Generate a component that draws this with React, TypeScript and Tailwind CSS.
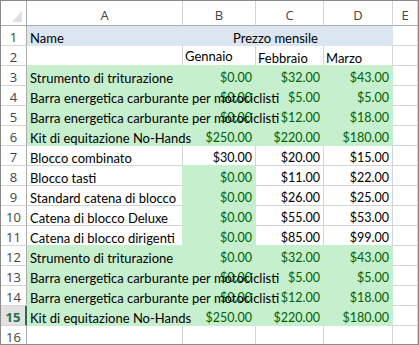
type Fill = "g" | "b" | null

const COLS = ["A", "B", "C", "D", "E"]

// fill per row (rows 1-16), columns A-E
const FILLS: Fill[][] = [
  ["b", "b", "b", "b", null],
  [null, null, null, null, null],
  ["g", "g", "g", "g", null],
  ["g", "g", "g", "g", null],
  ["g", "g", "g", "g", null],
  ["g", "g", "g", "g", null],
  [null, null, null, null, null],
  [null, "g", null, null, null],
  [null, "g", null, null, null],
  [null, "g", null, null, null],
  [null, "g", null, null, null],
  ["g", "g", "g", "g", null],
  ["g", "g", "g", "g", null],
  ["g", "g", "g", "g", null],
  ["g", "g", "g", "g", null],
  [null, null, null, null, null],
]

const BARRA = "Barra energetica carburante per motociclisti"

// rows 3-16: name + Gennaio / Febbraio / Marzo
const DATA: [string, string, string, string][] = [
  ["Strumento di triturazione", "$0.00", "$32.00", "$43.00"],
  [BARRA, "$0.00", "$5.00", "$5.00"],
  [BARRA, "$0.00", "$12.00", "$18.00"],
  ["Kit di equitazione No-Hands", "$250.00", "$220.00", "$180.00"],
  ["Blocco combinato", "$30.00", "$20.00", "$15.00"],
  ["Blocco tasti", "$0.00", "$11.00", "$22.00"],
  ["Standard catena di blocco", "$0.00", "$26.00", "$25.00"],
  ["Catena di blocco Deluxe", "$0.00", "$55.00", "$53.00"],
  ["Catena di blocco dirigenti", "$0.00", "$85.00", "$99.00"],
  ["Strumento di triturazione", "$0.00", "$32.00", "$43.00"],
  [BARRA, "$0.00", "$5.00", "$5.00"],
  [BARRA, "$0.00", "$12.00", "$18.00"],
  ["Kit di equitazione No-Hands", "$250.00", "$220.00", "$180.00"],
  ["", "", "", ""],
]

const BG = { g: "bg-[#c6efce]", b: "bg-[#dce6f1]", n: "bg-white" }
const RIGHT = { g: "border-r-[#c6efce]", b: "border-r-[#dce6f1]", n: "border-r-[#d4d4d4]" }
const BOTTOM = { g: "border-b-[#c6efce]", b: "border-b-[#dce6f1]", n: "border-b-[#d4d4d4]" }

const key = (f: Fill | undefined) => (f ? f : "n")

// a filled cell hides the gridlines on its edges
function edges(r: number, c: number) {
  const own = FILLS[r][c]
  const right = own ?? FILLS[r][c + 1] ?? null
  const below = own ?? FILLS[r + 1]?.[c] ?? null
  return `${BG[key(own)]} ${RIGHT[key(right)]} ${BOTTOM[key(below)]}`
}

const textFont = "font-[family-name:Lato,sans-serif] text-[13px] leading-[14px]"
const numFont = "font-[family-name:Lato,sans-serif] text-[12.5px] leading-[14px]"
const headFont = "font-[family-name:Open_Sans,sans-serif] text-[13px] leading-[14px] text-[#444]"

function RowHeader({ n }: { n: number }) {
  const active = n === 15
  return (
    <div
      className={`flex justify-center items-start pt-[4px] border-b border-b-[#d4d4d4] ${headFont} ${
        active
          ? "bg-[#e1e1e1] border-r-2 border-r-[#217346] font-bold !text-[#217346]"
          : "bg-white border-r border-r-[#ababab]"
      }`}
    >
      {n}
    </div>
  )
}

export default function App() {
  return (
    <div className="w-[419px] h-[345px] overflow-hidden bg-white border border-[#8a8a8a]">
      <div className="grid h-full grid-cols-[26px_156px_73px_68px_69px_1fr] grid-rows-[25px_repeat(15,20px)_1fr]">
        {/* intestazioni colonne */}
        <div className="flex items-end justify-end pr-[4px] pb-[3px] border-r border-b border-[#ababab] bg-white">
          <svg width="10" height="11" viewBox="0 0 10 11">
            <polygon points="10,0 10,11 0,11" fill="#dfdfdf" />
          </svg>
        </div>
        {COLS.map((c) => (
          <div
            key={c}
            className={`flex justify-center items-start pt-[7px] bg-white border-r border-r-[#d4d4d4] border-b border-b-[#ababab] ${headFont}`}
          >
            {c}
          </div>
        ))}

        {/* riga 1 */}
        <RowHeader n={1} />
        <div className={`flex items-end pl-[3px] border-r border-b ${edges(0, 0)} ${textFont}`}>Name</div>
        <div className={`col-span-3 flex items-end justify-center pr-[24px] border-r border-b ${edges(0, 3)} ${textFont}`}>
          Prezzo mensile
        </div>
        <div className={`border-r border-b ${edges(0, 4)}`} />

        {/* riga 2 */}
        <RowHeader n={2} />
        <div className={`border-r border-b ${edges(1, 0)}`} />
        <div className={`flex items-end pl-[2px] pb-[2px] border-r border-b ${edges(1, 1)} ${textFont}`}>Gennaio</div>
        <div className={`flex items-end pl-[2px] border-r border-b ${edges(1, 2)} ${textFont}`}>Febbraio</div>
        <div className={`flex items-end pl-[2px] border-r border-b ${edges(1, 3)} ${textFont}`}>Marzo</div>
        <div className={`border-r border-b ${edges(1, 4)}`} />

        {/* righe 3-16 */}
        {DATA.map(([name, gen, feb, mar], i) => {
          const r = i + 2
          return [
            <RowHeader key={`h${r}`} n={r + 1} />,
            <div
              key={`a${r}`}
              className={`flex items-end pl-[3px] whitespace-nowrap overflow-visible border-r border-b ${edges(r, 0)} ${textFont} text-black`}
            >
              <span className="relative z-10">{name}</span>
            </div>,
            ...[gen, feb, mar].map((v, j) => (
              <div
                key={`v${r}${j}`}
                className={`flex items-end justify-end pr-[3px] border-r border-b ${edges(r, j + 1)} ${numFont} ${
                  FILLS[r][j + 1] === "g" ? "text-[#006100]" : "text-black"
                }`}
              >
                {v}
              </div>
            )),
            <div key={`e${r}`} className={`border-r border-b ${edges(r, 4)}`} />,
          ]
        })}
      </div>
    </div>
  )
}
